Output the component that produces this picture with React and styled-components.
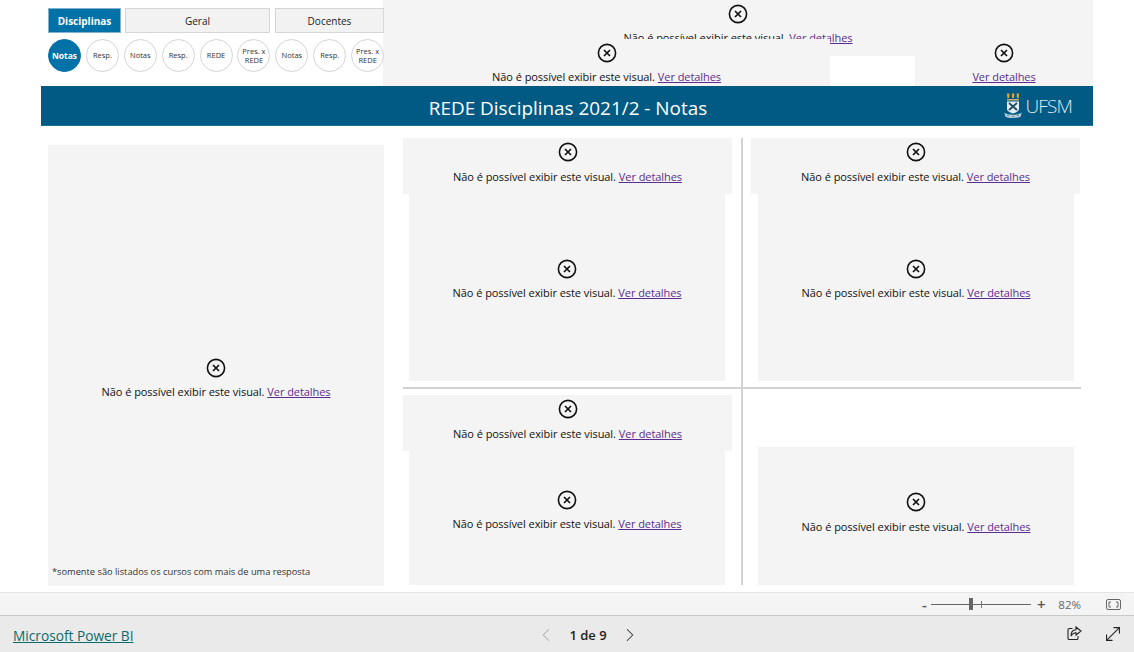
import React from 'react';
import styled, { createGlobalStyle } from 'styled-components';
import { ChevronLeft, ChevronRight, MoveDiagonal } from 'lucide-react';

const GlobalStyle = createGlobalStyle`
  html, body {
    margin: 0;
    padding: 0;
    background: #fff;
    font-family: "Open Sans", "Noto Sans", "Liberation Sans", sans-serif;
    color: #111;
  }
  * {
    box-sizing: border-box;
  }
`;

const Page = styled.div`
  width: 1134px;
  height: 652px;
  display: flex;
  flex-direction: column;
  overflow: hidden;
`;

const Canvas = styled.div`
  height: 592px;
  padding: 0 41px;
`;

const TopArea = styled.div`
  display: flex;
  height: 86px;
  width: 1052px;
`;

const NavColumn = styled.div`
  width: 342px;
  padding: 8px 0 0 7px;
  position: relative;
  z-index: 1;
`;

const TabRow = styled.div`
  display: flex;
  gap: 4px;
  width: 336px;
`;

const Tab = styled.div`
  height: 25px;
  width: ${({ $w }) => $w}px;
  margin-left: ${({ $ml }) => $ml || 0}px;
  flex: none;
  display: flex;
  align-items: center;
  justify-content: center;
  font-size: 10px;
  font-weight: ${({ $active }) => ($active ? 700 : 400)};
  color: ${({ $active }) => ($active ? '#fff' : '#222')};
  background: ${({ $active }) => ($active ? '#0072a8' : '#f2f2f2')};
  border: 1.5px solid ${({ $active }) => ($active ? '#7fb3cf' : '#d6d6d6')};
`;

const CircleRow = styled.div`
  display: flex;
  gap: 4.9px;
  margin-top: 6px;
  width: 340px;
`;

const Circle = styled.div`
  width: 33px;
  height: 33px;
  flex: none;
  border-radius: 50%;
  display: flex;
  align-items: center;
  justify-content: center;
  text-align: center;
  line-height: 9px;
  font-size: ${({ $active }) => ($active ? '8.5px' : '7.5px')};
  font-weight: ${({ $active }) => ($active ? 700 : 400)};
  color: ${({ $active }) => ($active ? '#fff' : '#333')};
  background: ${({ $active }) => ($active ? '#0072a8' : '#fff')};
  border: 1px solid ${({ $active }) => ($active ? '#0072a8' : '#d4d4d4')};
`;

const TopVisuals = styled.div`
  width: 710px;
  display: grid;
  grid-template-columns: 447px 85px 178px;
  grid-template-rows: 39px 17px 30px;
  background: #f4f4f4;
`;

const UpperVisual = styled.div`
  grid-area: 1 / 1 / 3 / 4;
  padding-top: 4px;
  overflow: hidden;
`;

const LowerVisual = styled.div`
  grid-area: 2 / 1 / 4 / 2;
  background: #f4f4f4;
  padding-top: 4px;
`;

const WhiteGap = styled.div`
  grid-area: 3 / 2 / 4 / 3;
  background: #fff;
`;

const LinkVisual = styled.div`
  grid-area: 2 / 3 / 4 / 4;
  padding-top: 4px;
`;

const Band = styled.div`
  width: 1052px;
  height: 40px;
  background: #005a84;
  border-bottom: 1px solid #1b7099;
  display: grid;
  grid-template-columns: 1fr auto 1fr;
  align-items: center;
`;

const BandTitle = styled.div`
  grid-column: 2;
  color: #fff;
  font-size: 18.9px;
  line-height: 24px;
  margin: 4px 0 0 2px;
  white-space: nowrap;
`;

const Logo = styled.div`
  grid-column: 3;
  justify-self: end;
  margin-right: 21px;
  display: flex;
  align-items: center;
  gap: 4px;
  color: #dfe9ef;
  font-size: 19px;
  font-weight: 300;
  letter-spacing: -0.9px;
`;

const Body = styled.div`
  display: flex;
  padding: 12px 0 0 7px;
`;

const LeftPanel = styled.div`
  width: 336px;
  height: 441px;
  margin-top: 7px;
  background: #f4f4f4;
  padding-top: 213px;
  position: relative;
`;

const Note = styled.div`
  position: absolute;
  left: 4px;
  bottom: 8px;
  font-size: 9.27px;
  line-height: 12px;
  color: #333;
`;

const Quadrants = styled.div`
  margin-left: 19px;
  display: grid;
  grid-template-columns: 340px 338px;
  grid-template-rows: 251px 196px;
`;

const Quadrant = styled.div`
  display: flex;
  flex-direction: column;
  padding-left: ${({ $left }) => $left}px;
  padding-top: ${({ $top }) => $top}px;
  border-right: ${({ $divR }) => ($divR ? '2px solid #d2d2d2' : 'none')};
  border-bottom: ${({ $divB }) => ($divB ? '2px solid #d2d2d2' : 'none')};
`;

const Box = styled.div`
  background: #f4f4f4;
  flex: none;
  width: ${({ $w }) => $w}px;
  height: ${({ $h }) => $h}px;
  margin-left: ${({ $ml }) => $ml || 0}px;
  padding-top: ${({ $pad }) => $pad}px;
`;

const ErrorBox = styled.div`
  display: flex;
  flex-direction: column;
  align-items: center;
`;

const ErrorLine = styled.div`
  margin-top: ${({ $gap }) => $gap || 6}px;
  font-size: 11px;
  letter-spacing: -0.07px;
  word-spacing: 0.1px;
  line-height: 16px;
  white-space: nowrap;
  color: #111;
`;

const DetailLink = styled.a`
  color: #5c2d91;
  text-decoration: underline;
`;

const ZoomBar = styled.div`
  height: 24px;
  background: #f4f4f4;
  border-top: 1px solid #e6e6e6;
  border-bottom: 1px solid #c8c8c8;
  display: flex;
  align-items: center;
  justify-content: flex-end;
  padding-right: 13px;
  color: #666;
  font-size: 12px;
`;

const ZoomSign = styled.span`
  font-size: 15px;
  font-weight: 600;
  line-height: 14px;
  width: 10px;
  text-align: center;
  color: #555;
`;

const ZoomTrack = styled.div`
  width: 100px;
  height: 1px;
  margin: 0 5px 0 2px;
  background: #666;
  position: relative;
`;

const ZoomThumb = styled.div`
  position: absolute;
  left: 38px;
  top: -6px;
  width: 4px;
  height: 12px;
  background: #666;
`;

const ZoomTick = styled.div`
  position: absolute;
  left: 50px;
  top: -3px;
  width: 1px;
  height: 7px;
  background: #777;
`;

const ZoomValue = styled.span`
  margin: 0 25px 0 12px;
  font-size: 11.5px;
`;

const FooterBar = styled.div`
  flex: 1;
  background: #eaeaea;
  display: grid;
  grid-template-columns: 1fr auto 1fr;
  align-items: center;
  padding: 2px 13px 0;
`;

const BrandLink = styled.a`
  color: #0b6a6a;
  text-decoration: underline;
  font-size: 13.7px;
`;

const Pager = styled.div`
  display: flex;
  align-items: center;
  gap: 12px;
  margin-left: 42px;
  font-size: 13px;
  font-weight: 600;
  color: #222;
`;

const FooterIcons = styled.div`
  justify-self: end;
  display: flex;
  align-items: center;
  gap: 20px;
  margin: -3px -3px 0 0;
`;

const ErrorIcon = () => (
  <svg width="20" height="20" viewBox="0 0 20 20" fill="none" stroke="#111">
    <circle cx="10" cy="10" r="8.6" strokeWidth="1.6" />
    <path d="M7 7l6 6M13 7l-6 6" strokeWidth="1.7" />
  </svg>
);

const CrestIcon = () => (
  <svg width="18" height="27" viewBox="0 0 18 27">
    <path d="M3 1.500h2.500l-.4 4.500H3.400zM7.800 1.500h2.500L9.900 6H8.200zM12.600 1.500h2.500L14.700 6H13z" fill="#e5a52e" />
    <path d="M3 7h12v1.500H3z" fill="#c9b070" />
    <path d="M3 9.500h12v7.500c0 2-3 3.500-6 4.500-3-1-6-2.500-6-4.500z" fill="#e6eef2" />
    <path d="M5 11l8 7M13 11l-8 7" stroke="#1d4a63" strokeWidth="1.7" />
    <path d="M0.300 20.500c3 3 14.400 3 17.400 0l-1 4c-3 2-12.400 2-15.400 0z" fill="#b9cdd9" />
    <path d="M3 23.500h2M8 24.300h2M13 23.500h2" stroke="#5f8aa3" strokeWidth="1" />
  </svg>
);

const FitIcon = () => (
  <svg width="15" height="11" viewBox="0 0 15 11" fill="none" stroke="#666">
    <rect x="0.500" y="0.500" width="14" height="10" rx="1.500" />
    <path d="M5 3H3v5h2M10 3h2v5h-2" />
  </svg>
);

const ShareIcon = () => (
  <svg width="15" height="15" viewBox="0 0 15 15" fill="none" stroke="#222" strokeWidth="1.1">
    <path d="M5.500 2.500H2.300Q1 2.500 1 3.800v8.400Q1 13.500 2.300 13.500h7.400q1.300 0 1.300-1.300V10" />
    <path d="M9 1l5 4-5 4V6.800C6.500 6.800 5 8 4 10c0-3.500 2-6 5-6.200z" />
  </svg>
);

const VisualError = ({ hideMessage, gap }) => (
  <ErrorBox>
    <ErrorIcon />
    <ErrorLine $gap={gap}>
      {hideMessage ? null : 'Não é possível exibir este visual. '}
      <DetailLink href="#">Ver detalhes</DetailLink>
    </ErrorLine>
  </ErrorBox>
);

const circles = [
  { label: 'Notas', active: true },
  { label: 'Resp.' },
  { label: 'Notas' },
  { label: 'Resp.' },
  { label: 'REDE' },
  { label: 'Pres. x REDE' },
  { label: 'Notas' },
  { label: 'Resp.' },
  { label: 'Pres. x REDE' },
];

const App = () => (
  <Page>
    <GlobalStyle />
    <Canvas>
      <TopArea>
        <NavColumn>
          <TabRow>
            <Tab $active $w={73}>Disciplinas</Tab>
            <Tab $w={145}>Geral</Tab>
            <Tab $w={109} $ml={1}>Docentes</Tab>
          </TabRow>
          <CircleRow>
            {circles.map((item, index) => (
              <Circle key={index} $active={item.active}>{item.label}</Circle>
            ))}
          </CircleRow>
        </NavColumn>
        <TopVisuals>
          <UpperVisual>
            <VisualError />
          </UpperVisual>
          <LowerVisual>
            <VisualError />
          </LowerVisual>
          <WhiteGap />
          <LinkVisual>
            <VisualError hideMessage />
          </LinkVisual>
        </TopVisuals>
      </TopArea>
      <Band>
        <BandTitle>REDE Disciplinas 2021/2 - Notas</BandTitle>
        <Logo>
          <CrestIcon />
          UFSM
        </Logo>
      </Band>
      <Body>
        <LeftPanel>
          <VisualError />
          <Note>*somente são listados os cursos com mais de uma resposta</Note>
        </LeftPanel>
        <Quadrants>
          <Quadrant $divR $divB>
            <Box $w={329} $h={56} $pad={4}><VisualError gap={7} /></Box>
            <Box $w={316} $h={187} $ml={6} $pad={65}><VisualError /></Box>
          </Quadrant>
          <Quadrant $divB $left={8}>
            <Box $w={329} $h={56} $pad={4}><VisualError gap={7} /></Box>
            <Box $w={316} $h={187} $ml={7} $pad={65}><VisualError /></Box>
          </Quadrant>
          <Quadrant $divR $top={6}>
            <Box $w={329} $h={56} $pad={4}><VisualError gap={7} /></Box>
            <Box $w={316} $h={134} $ml={6} $pad={39}><VisualError /></Box>
          </Quadrant>
          <Quadrant $top={58} $left={15}>
            <Box $w={316} $h={138} $pad={45}><VisualError gap={7} /></Box>
          </Quadrant>
        </Quadrants>
      </Body>
    </Canvas>
    <ZoomBar>
      <ZoomSign>-</ZoomSign>
      <ZoomTrack>
        <ZoomThumb />
        <ZoomTick />
      </ZoomTrack>
      <ZoomSign>+</ZoomSign>
      <ZoomValue>82%</ZoomValue>
      <FitIcon />
    </ZoomBar>
    <FooterBar>
      <div>
        <BrandLink href="#">Microsoft Power BI</BrandLink>
      </div>
      <Pager>
        <ChevronLeft size={22} strokeWidth={1.1} color="#aaa" />
        1 de 9
        <ChevronRight size={22} strokeWidth={1.1} color="#333" />
      </Pager>
      <FooterIcons>
        <ShareIcon />
        <MoveDiagonal size={22} strokeWidth={1.2} color="#222" />
      </FooterIcons>
    </FooterBar>
  </Page>
);

export default App;
